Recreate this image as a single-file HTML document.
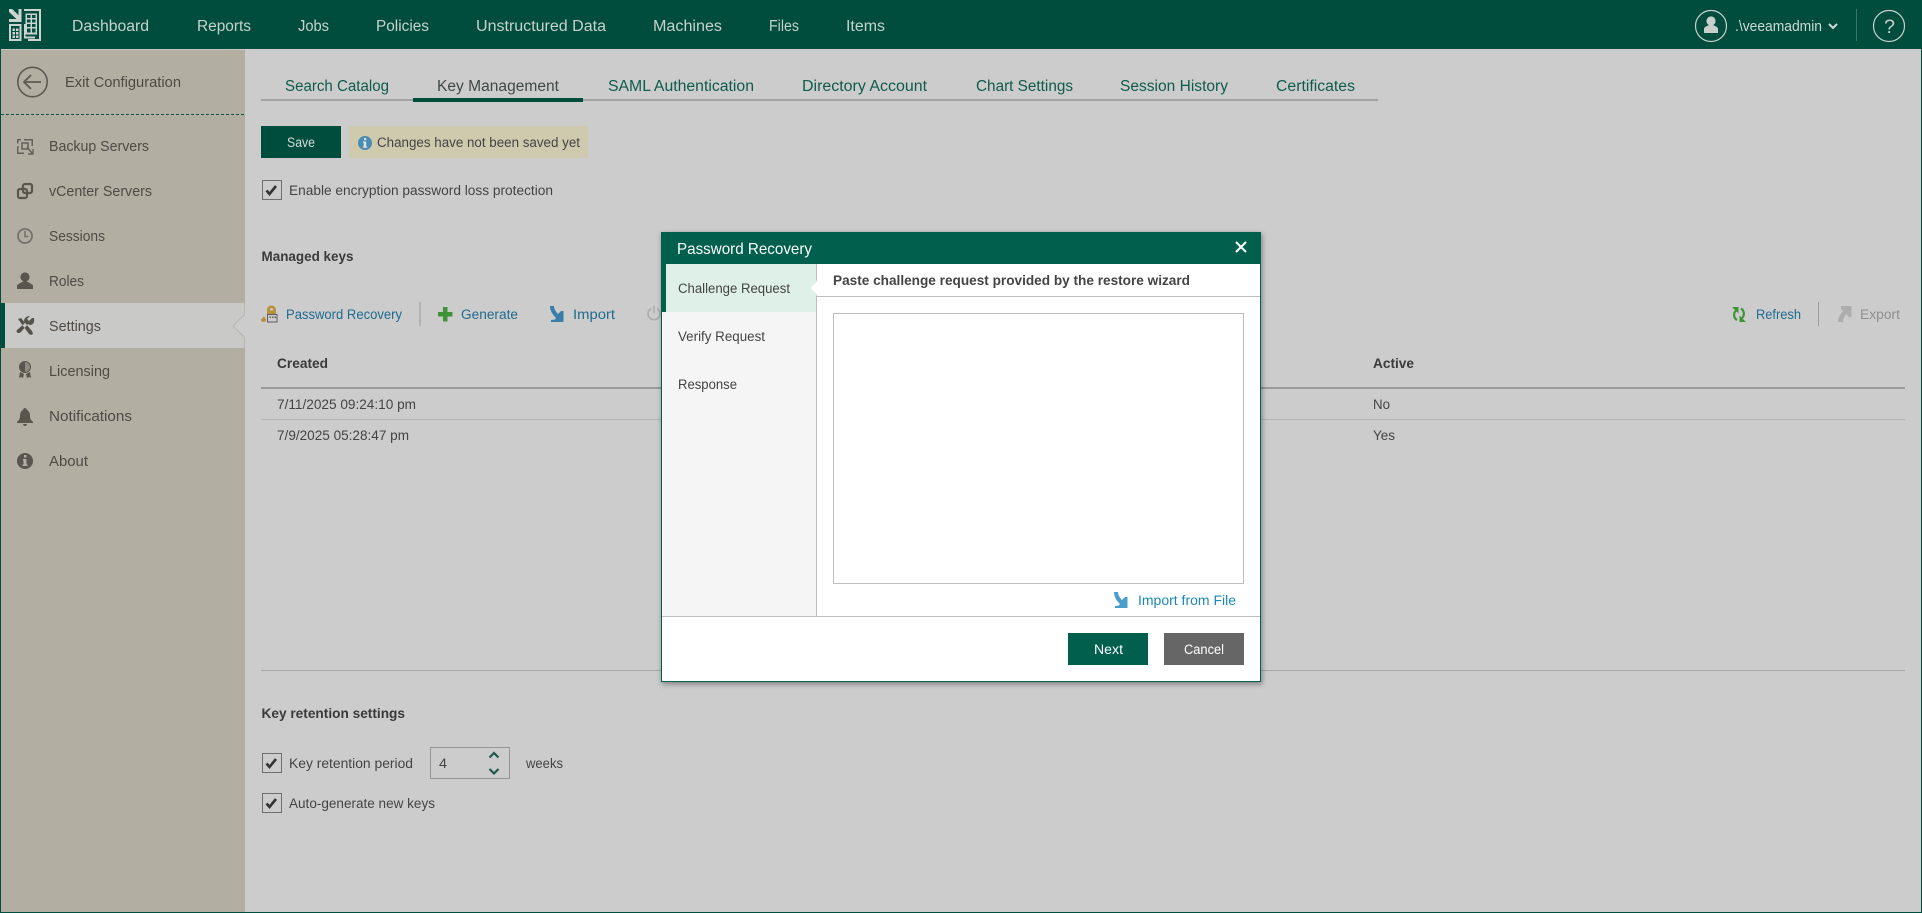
<!DOCTYPE html>
<html lang="en">
<head>
<meta charset="utf-8">
<title>Key Management</title>
<style>
html,body{margin:0;padding:0;width:1922px;height:913px;overflow:hidden;background:#ccc}
svg{display:block;position:absolute;left:0;top:0}
text{font-family:"Liberation Sans","DejaVu Sans",sans-serif;font-size:13.5px;fill:#444}
.nav{font-size:15.5px;fill:#c6d2cc}
.side{font-size:14.5px;fill:#4f4b44}
.tab{font-size:15.5px;fill:#0f5b4d}
.b{font-weight:bold;fill:#3a3a3a}
.lnk{fill:#1f6b8e}
.w{fill:#fff}
.dlg{fill:#444}
</style>
</head>
<body>
<svg width="1922" height="913" viewBox="0 0 1922 913" xmlns="http://www.w3.org/2000/svg">
<!-- base -->
<rect width="1922" height="913" fill="#cccccc"/>
<rect x="1" y="50" width="244" height="863" fill="#b2aea2"/>
<rect width="1922" height="49" fill="#004d3e"/>
<rect x="1" y="49" width="244" height="1" fill="#c6c6c0"/>
<rect x="0" y="49" width="1" height="864" fill="#004d3e"/>
<rect x="1921" y="49" width="1" height="864" fill="#004d3e"/>
<rect x="0" y="912" width="1922" height="1" fill="#004d3e"/>

<!-- logo -->
<g fill="#cdd4d0">
<path d="M9 9h3.200l6.300 6.300V9H21.500v13H9v-3h7.400L9 12z"/>
<path d="M9 24h12.500v17H9zM11 26v13h8.500V26z" fill-rule="evenodd"/>
<path d="M12.500 28.500h2.500v2.500h-2.500zM16 28.500h2.500v2.500H16zM12.500 32h2.500v2.500h-2.500zM16 32h2.500v2.500H16zM12.500 35.500h2.500V38h-2.500zM16 35.500h2.500V38H16z"/>
<path d="M24 9h17v32H28v-2h11V11H24z"/>
<path d="M25.500 13.500h11.500v21H25.500zM27 15v3h3.500v-3zM32 15v3h3.500v-3zM27 19.500v3h3.500v-3zM32 19.500v3h3.500v-3zM27 24v3h3.500v-3zM32 24v3h3.500v-3zM27 28.500v4h3.500v-4zM32 28.500v4h3.500v-4z" fill-rule="evenodd"/>
<path d="M24 24h1.500v13.500H24zM24 36.500h11v2H24z"/>
</g>

<!-- nav -->
<text class="nav" x="72" y="31" textLength="77" lengthAdjust="spacingAndGlyphs">Dashboard</text>
<text class="nav" x="197" y="31" textLength="54" lengthAdjust="spacingAndGlyphs">Reports</text>
<text class="nav" x="298" y="31" textLength="31" lengthAdjust="spacingAndGlyphs">Jobs</text>
<text class="nav" x="376" y="31" textLength="53" lengthAdjust="spacingAndGlyphs">Policies</text>
<text class="nav" x="476" y="31" textLength="130" lengthAdjust="spacingAndGlyphs">Unstructured Data</text>
<text class="nav" x="653" y="31" textLength="69" lengthAdjust="spacingAndGlyphs">Machines</text>
<text class="nav" x="769" y="31" textLength="30" lengthAdjust="spacingAndGlyphs">Files</text>
<text class="nav" x="846" y="31" textLength="39" lengthAdjust="spacingAndGlyphs">Items</text>

<!-- user -->
<circle cx="1711" cy="26" r="15.5" fill="none" stroke="#c9d0cc" stroke-width="1.2"/>
<circle cx="1711" cy="21" r="4.6" fill="#c9d0cc"/>
<path d="M1704 33v-4c0-2 3-3 5-4h4c2 1 5 2 5 4v4z" fill="#c9d0cc"/>
<text class="nav" style="font-size:14.5px;fill:#cfd8d3" x="1735" y="31" textLength="87" lengthAdjust="spacingAndGlyphs">.\veeamadmin</text>
<path d="M1829 24l4 4 4-4" fill="none" stroke="#d5dbd8" stroke-width="2"/>
<rect x="1856" y="9" width="1" height="32" fill="#3f7568"/>
<circle cx="1889" cy="26" r="15.5" fill="none" stroke="#c9d0cc" stroke-width="1.2"/>
<text class="nav" style="font-size:19px;fill:#c9d0cc" x="1884" y="33" textLength="11" lengthAdjust="spacingAndGlyphs">?</text>

<!-- sidebar -->
<circle cx="32.5" cy="82" r="14.7" fill="none" stroke="#5e5a53" stroke-width="1.6"/>
<path d="M41 82H25M31 75l-7 7 7 7" fill="none" stroke="#5e5a53" stroke-width="1.8"/>
<text class="side" x="65" y="87" textLength="116" lengthAdjust="spacingAndGlyphs">Exit Configuration</text>
<line x1="1" y1="114.5" x2="245" y2="114.5" stroke="#0d5142" stroke-dasharray="3 2"/>

<path d="M17 139h4v1.500h-2.500v3H17zM24 139h9v7h-1.500v-5.500H24zM17 146h1.500v6.500H24v1.500h-7z" fill="#65615a"/>
<rect x="22" y="143" width="6" height="6" fill="none" stroke="#65615a" stroke-width="1.5"/>
<path d="M27 147l5 6M33 149v5h-5" fill="none" stroke="#65615a" stroke-width="1.4"/>
<text class="side" x="49" y="151" textLength="100" lengthAdjust="spacingAndGlyphs">Backup Servers</text>

<rect x="23" y="184" width="9" height="9" rx="2" fill="none" stroke="#5a564e" stroke-width="2.200"/>
<rect x="18" y="189" width="9" height="9" rx="2" fill="none" stroke="#5a564e" stroke-width="2.200"/>
<text class="side" x="49" y="196" textLength="103" lengthAdjust="spacingAndGlyphs">vCenter Servers</text>

<circle cx="25" cy="236" r="7" fill="none" stroke="#75716c" stroke-width="1.8"/>
<path d="M25 231v5.500h3.500" fill="none" stroke="#75716c" stroke-width="1.6"/>
<text class="side" x="49" y="241" textLength="56" lengthAdjust="spacingAndGlyphs">Sessions</text>

<circle cx="25" cy="277" r="4.600" fill="#5a564e"/>
<path d="M17 289v-3c0-2 4-3 6-4.500h4c2 1.500 6 2.500 6 4.500v3z" fill="#5a564e"/>
<text class="side" x="49" y="286" textLength="35" lengthAdjust="spacingAndGlyphs">Roles</text>

<rect x="0" y="303" width="5" height="45" fill="#004d3e"/>
<rect x="5" y="303" width="240" height="45" fill="#c9c9c8"/>
<path d="M245 314L233 326L245 338V348H246V303H245Z" fill="#cccccc"/>
<path d="M244.500 303V314.500L233 326L244.500 337.500V348" fill="none" stroke="#b6b6b2" stroke-width="1"/>
<path d="M18 319l3-1 11 13 1 3-2 1-2-1zM32 318l-3 3-2-2 3-3c-3 0-6 2-6 5l1 2-8 7c-1 1 0 3 1 3s2 0 3-1l7-8 2 1c3 0 5-3 4-7z" fill="#55524b"/>
<text class="side" x="49" y="331" textLength="52" lengthAdjust="spacingAndGlyphs">Settings</text>

<circle cx="25" cy="367" r="6" fill="#5a564e"/>
<path d="M25 362a5 5 0 0 1 0 10z" fill="#8d8a81"/>
<path d="M20 372l-1 6 2-1 2 1 1-4zM30 372l1 6-2-1-2 1-1-4z" fill="#5a564e"/>
<text class="side" x="49" y="376" textLength="61" lengthAdjust="spacingAndGlyphs">Licensing</text>

<path d="M25 408c1 0 2 1 2 2 2 1 3 3 3 6 0 3 1 4 3 6v1H17v-1c2-2 3-3 3-6 0-3 1-5 3-6 0-1 1-2 2-2zM23 424h4c0 1-1 2-2 2s-2-1-2-2z" fill="#5a564e"/>
<text class="side" x="49" y="421" textLength="83" lengthAdjust="spacingAndGlyphs">Notifications</text>

<circle cx="25" cy="461" r="8" fill="#5a564e"/>
<path d="M24 455h2.500v2.500H24zM23 459h3.500v5.500h1v1.500h-5v-1.500h1v-4h-.5z" fill="#b2aea2"/>
<text class="side" x="49" y="466" textLength="39" lengthAdjust="spacingAndGlyphs">About</text>

<!-- tabs -->
<rect x="261" y="99" width="1117" height="2" fill="#a3a3a3"/>
<rect x="413" y="98" width="170" height="4" fill="#004d3e"/>
<text class="tab" x="285" y="91" textLength="104" lengthAdjust="spacingAndGlyphs">Search Catalog</text>
<text class="tab" style="fill:#3f4a47" x="437" y="91" textLength="122" lengthAdjust="spacingAndGlyphs">Key Management</text>
<text class="tab" x="608" y="91" textLength="146" lengthAdjust="spacingAndGlyphs">SAML Authentication</text>
<text class="tab" x="802" y="91" textLength="125" lengthAdjust="spacingAndGlyphs">Directory Account</text>
<text class="tab" x="976" y="91" textLength="97" lengthAdjust="spacingAndGlyphs">Chart Settings</text>
<text class="tab" x="1120" y="91" textLength="108" lengthAdjust="spacingAndGlyphs">Session History</text>
<text class="tab" x="1276" y="91" textLength="79" lengthAdjust="spacingAndGlyphs">Certificates</text>

<!-- save row -->
<rect x="261" y="126" width="80" height="32" fill="#004d3e"/>
<text style="fill:#d5dcd9" x="287" y="147" textLength="28" lengthAdjust="spacingAndGlyphs">Save</text>
<rect x="349" y="126" width="239" height="32" fill="#cfc9ad"/>
<circle cx="365" cy="143" r="7" fill="#4a8cb0"/>
<path d="M364 138h2.200v2.200H364zM363 141.500h3.200v5h1v1.200h-4.500v-1.200h1v-3.800h-.7z" fill="#d8e2e6"/>
<text x="377" y="147" textLength="203" lengthAdjust="spacingAndGlyphs">Changes have not been saved yet</text>

<!-- checkbox 1 -->
<rect x="262.500" y="180.500" width="19" height="19" fill="none" stroke="#6e6e6e"/>
<path d="M266.500 190.500l3 3.500 6.500-8" fill="none" stroke="#333" stroke-width="2.600"/>
<text x="289" y="195" textLength="264" lengthAdjust="spacingAndGlyphs">Enable encryption password loss protection</text>

<text class="b" x="261.500" y="261" textLength="92" lengthAdjust="spacingAndGlyphs">Managed keys</text>

<!-- toolbar -->
<path d="M267 314v-4c0-3 2.500-4.500 4.500-4.500s4.500 1.500 4.500 4.500v4zM270 310.500h3c0-2-.5-2.500-1.500-2.500s-1.500.5-1.500 2.500z" fill="#b8913a" fill-rule="evenodd"/>
<rect x="267.500" y="314.500" width="9.500" height="7.500" fill="#ccc" stroke="#5d5d5d"/>
<path d="M269.500 316.500h1.500v1.500h-1.500zM272 316.500h1.500v1.500H272zM274.500 316.500h1.500v1.500h-1.500z" fill="#5d5d5d"/>
<path d="M264 316c1 2 2 3 2 4s-1 2-2.500 2-2.500-1-2.500-2c0-1 2-2 3-4z" fill="#b8913a"/>
<text class="lnk" x="286" y="319" textLength="116" lengthAdjust="spacingAndGlyphs">Password Recovery</text>
<rect x="419.500" y="302" width="1" height="24" fill="#9d9d9d"/>
<path d="M443 307h4.500v5h5v4.500h-5v5H443v-5h-5V312h5z" fill="#3f9337"/>
<text class="lnk" x="461" y="319" textLength="57" lengthAdjust="spacingAndGlyphs">Generate</text>
<path d="M550 306h4c0 3 2 6 4 8l3-3h2.500v11H551v-2l4-0.500 1-1.500c-3-3-6-7-6-12z" fill="#3a7ea8"/>
<text class="lnk" x="573" y="319" textLength="42" lengthAdjust="spacingAndGlyphs">Import</text>
<path d="M651 308.500a6 6 0 1 0 6 0" fill="none" stroke="#adadad" stroke-width="1.600"/>
<rect x="653.300" y="306" width="1.500" height="7" fill="#adadad"/>
<path d="M1736 310.500a6 6 0 0 0 1 9.500M1742 318a6 6 0 0 0-1-9.500" fill="none" stroke="#3f9337" stroke-width="2.200"/>
<path d="M1732 307h6.500v6.500zM1746 322h-6.500v-6.500z" fill="#3f9337"/>
<text class="lnk" x="1756" y="319" textLength="45" lengthAdjust="spacingAndGlyphs">Refresh</text>
<rect x="1818" y="302" width="1" height="24" fill="#9d9d9d"/>
<path d="M1838 322c0-5 3-9 5-11l-2-2v-3h10.500v11h-3l-2-3c-2 2-3.500 5-3.500 8z" fill="#adadad"/>
<text style="fill:#8f8f8f" x="1860" y="319" textLength="40" lengthAdjust="spacingAndGlyphs">Export</text>

<!-- table -->
<text class="b" x="277" y="368" textLength="51" lengthAdjust="spacingAndGlyphs">Created</text>
<text class="b" x="1373" y="368" textLength="41" lengthAdjust="spacingAndGlyphs">Active</text>
<rect x="261" y="387" width="1644" height="2" fill="#9b9b9b"/>
<text x="277" y="409" textLength="139" lengthAdjust="spacingAndGlyphs">7/11/2025 09:24:10 pm</text>
<text x="1373" y="409" textLength="17" lengthAdjust="spacingAndGlyphs">No</text>
<rect x="261" y="419" width="1644" height="1" fill="#b4b4b4"/>
<text x="277" y="440" textLength="132" lengthAdjust="spacingAndGlyphs">7/9/2025 05:28:47 pm</text>
<text x="1373" y="440" textLength="22" lengthAdjust="spacingAndGlyphs">Yes</text>
<rect x="261" y="670" width="1644" height="1" fill="#a6a6a6"/>

<!-- retention -->
<text class="b" x="261.500" y="718" textLength="143.500" lengthAdjust="spacingAndGlyphs">Key retention settings</text>
<rect x="262.500" y="753.500" width="19" height="19" fill="none" stroke="#6e6e6e"/>
<path d="M266.500 763.500l3 3.500 6.500-8" fill="none" stroke="#333" stroke-width="2.600"/>
<text x="289" y="768" textLength="124" lengthAdjust="spacingAndGlyphs">Key retention period</text>
<rect x="430.500" y="747.500" width="79" height="31" fill="none" stroke="#959595"/>
<text x="439" y="768" textLength="8" lengthAdjust="spacingAndGlyphs">4</text>
<path d="M489.500 757.500l4.500-4.500 4.500 4.500M489.500 769l4.500 4.500 4.500-4.500" fill="none" stroke="#1f5a4c" stroke-width="2.200"/>
<text x="526" y="768" textLength="37" lengthAdjust="spacingAndGlyphs">weeks</text>
<rect x="262.500" y="793.500" width="19" height="19" fill="none" stroke="#6e6e6e"/>
<path d="M266.500 803.500l3 3.500 6.500-8" fill="none" stroke="#333" stroke-width="2.600"/>
<text x="289" y="808" textLength="146" lengthAdjust="spacingAndGlyphs">Auto-generate new keys</text>

<!-- dialog -->
<defs><filter id="s" x="-5%" y="-5%" width="110%" height="110%"><feDropShadow dx="1" dy="2" stdDeviation="3" flood-color="#000" flood-opacity=".4"/></filter></defs>
<rect x="661" y="232" width="600" height="450" fill="#fff" filter="url(#s)"/>
<rect x="661.500" y="232.500" width="599" height="449" fill="#fff" stroke="#005f4d"/>
<rect x="661" y="232" width="600" height="32" fill="#005f4d"/>
<text class="w" style="font-size:16px" x="677" y="254" textLength="135" lengthAdjust="spacingAndGlyphs">Password Recovery</text>
<path d="M1236 242l10 10M1246 242l-10 10" stroke="#fff" stroke-width="2" fill="none"/>

<rect x="662" y="264" width="154" height="352" fill="#f5f5f5"/>
<rect x="816" y="264" width="1" height="352" fill="#bdbdbd"/>
<rect x="661" y="264" width="5" height="48" fill="#005f4d"/>
<rect x="666" y="264" width="150" height="48" fill="#def0e8"/>
<path d="M817 280l-8 8 8 8z" fill="#fff"/>
<path d="M817 281l-7.500 7 7.500 7" fill="none" stroke="#d5e2dc" stroke-width=".8"/>
<text class="dlg" x="678" y="293" textLength="112" lengthAdjust="spacingAndGlyphs">Challenge Request</text>
<text class="dlg" x="678" y="341" textLength="87" lengthAdjust="spacingAndGlyphs">Verify Request</text>
<text class="dlg" x="678" y="389" textLength="59" lengthAdjust="spacingAndGlyphs">Response</text>

<text class="b" style="fill:#444" x="833" y="285" textLength="357" lengthAdjust="spacingAndGlyphs">Paste challenge request provided by the restore wizard</text>
<rect x="817" y="296" width="443" height="1" fill="#bdbdbd"/>
<rect x="833.500" y="313.500" width="410" height="270" fill="#fff" stroke="#bdbdbd"/>
<path d="M1114 592h4c0 3 2 6 4 8l3-3h2.500v11H1115v-2l4-.5 1-1.500c-3-3-6-7-6-12z" fill="#4a9ccb"/>
<text style="fill:#1b87b8" x="1138" y="605" textLength="98" lengthAdjust="spacingAndGlyphs">Import from File</text>
<rect x="662" y="616" width="598" height="1" fill="#bdbdbd"/>
<rect x="1068" y="633" width="80" height="32" fill="#005f4d"/>
<text class="w" x="1094" y="654" textLength="29" lengthAdjust="spacingAndGlyphs">Next</text>
<rect x="1164" y="633" width="80" height="32" fill="#666666"/>
<text class="w" x="1184" y="654" textLength="40" lengthAdjust="spacingAndGlyphs">Cancel</text>
</svg>
</body>
</html>
